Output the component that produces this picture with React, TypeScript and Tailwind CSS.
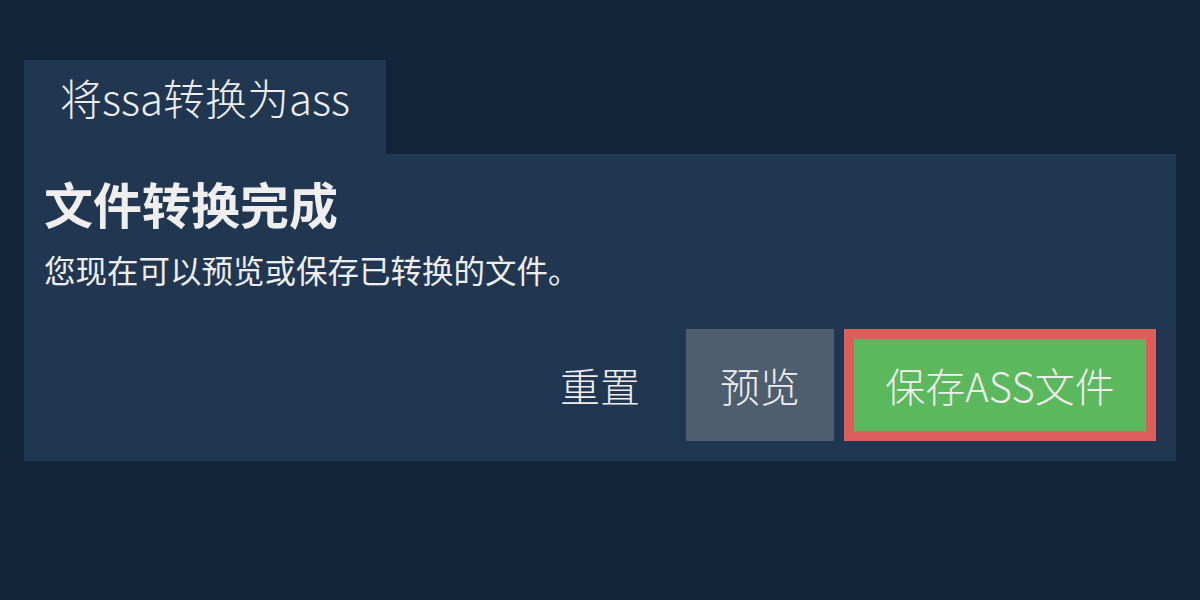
export default function App() {
  const font = {
    fontFamily: '"Noto Sans CJK SC", "Noto Sans", sans-serif',
  };
  const light = {
    fontFamily:
      '"Noto Sans CJK SC Light", "Noto Sans CJK SC DemiLight", "Noto Sans CJK SC", sans-serif',
  };

  return (
    <div
      className="w-[1200px] h-[600px] bg-[#11243a] text-[#eeeeee] px-6 pt-[60px]"
      style={font}
    >
      {/* Tab */}
      <div className="flex">
        <div
          className="bg-[#213650] h-[94px] px-9 pt-[7px] text-[42px] leading-[60px] font-light"
          style={light}
        >
          将ssa转换为ass
        </div>
      </div>

      {/* Card */}
      <div className="bg-[#213650] p-5">
        <h1 className="text-[49px] leading-[58px] font-bold">文件转换完成</h1>
        <p className="text-[31.5px] leading-[44px] mt-[15px]">
          您现在可以预览或保存已转换的文件。
        </p>

        <div className="flex justify-end items-center mt-[38px]">
          <button
            className="h-[112px] px-6 text-[40px] font-light mr-[22px]"
            style={light}
          >
            重置
          </button>
          <button
            className="h-[112px] w-[148px] bg-[#4e5e6e] text-[40px] font-light"
            style={light}
          >
            预览
          </button>
          <button
            className="h-[112px] w-[312px] ml-[10px] bg-[#5cb85c] border-[10px] border-[#dc5e5b] text-[40px] font-light"
            style={light}
          >
            保存ASS文件
          </button>
        </div>
      </div>
    </div>
  );
}
